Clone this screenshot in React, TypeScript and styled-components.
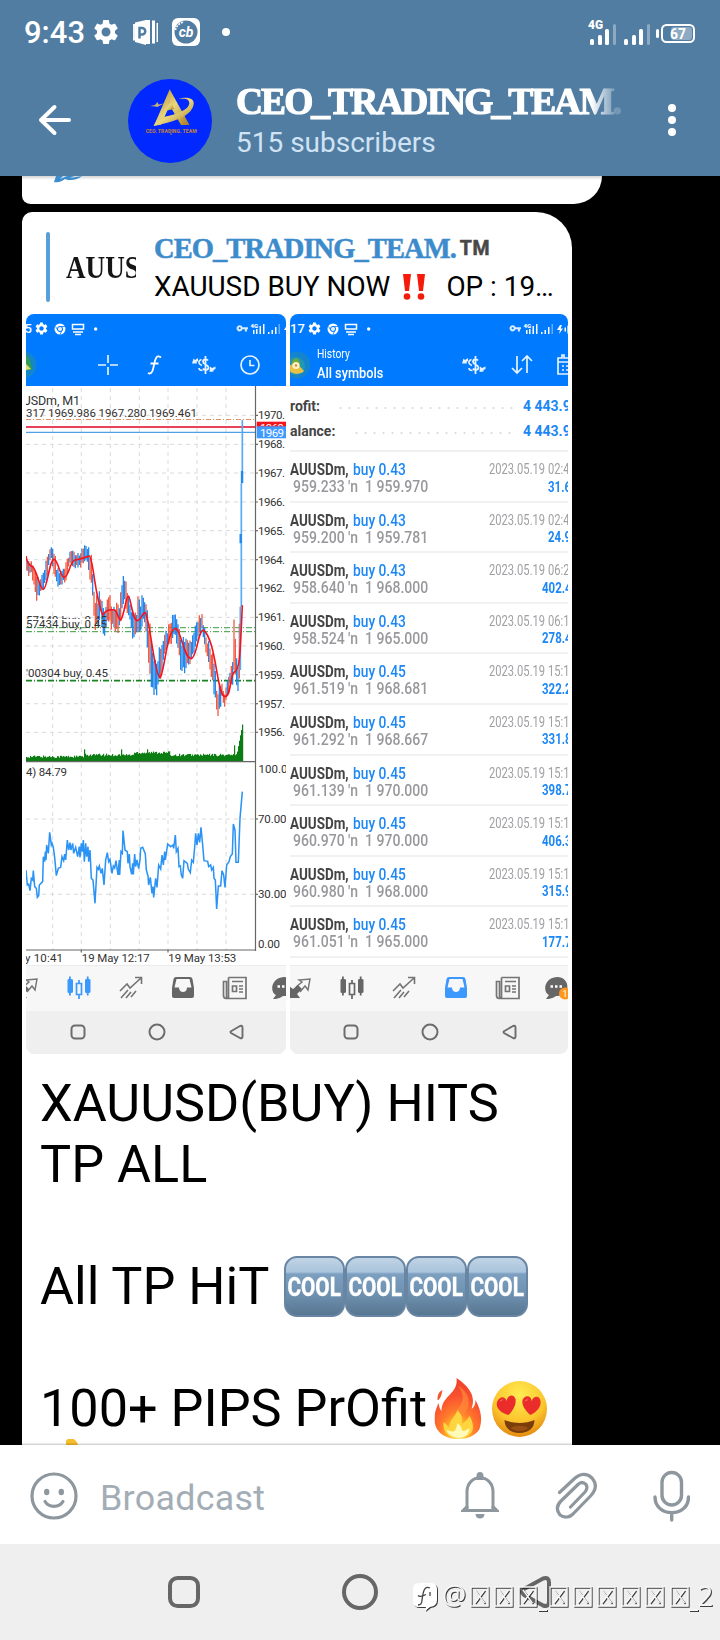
import { Fragment, ReactNode } from 'react'
import { MdSettings, MdVpnKey } from 'react-icons/md'
import styled, { createGlobalStyle } from 'styled-components'

const GlobalStyle = createGlobalStyle`
  * {
    box-sizing: border-box;
  }

  body {
    margin: 0;
    background: #000;
    font-family: Roboto, sans-serif;
  }

  svg {
    display: block;
    flex-shrink: 0;
  }
`

const SPhone = styled.div`
  display: flex;
  flex-direction: column;
  width: 720px;
  height: 1640px;
  overflow: hidden;
`

/* ---------- header ---------- */

const SHeader = styled.header`
  height: 176px;
  background: #517da2;
  color: #fff;
`

const SStatusBar = styled.div`
  display: flex;
  align-items: center;
  height: 64px;
  padding: 0 24px;
`

const STime = styled.span`
  width: 68px;
  padding-top: 1px;
  font-size: 31px;
  font-weight: 500;
  line-height: 64px;
`

const SSpacer = styled.div`
  flex: 1;
`

const SToolbar = styled.div`
  display: flex;
  height: 112px;
  padding-left: 36px;
`

const SToolIcon = styled.div<{ $top: number; $width: number }>`
  width: ${({ $width }) => $width}px;
  padding-top: ${({ $top }) => $top}px;
`

const SChannel = styled.div`
  flex: 1;
  padding-top: 16px;
`

const SChannelName = styled.div`
  width: 387px;
  overflow: hidden;
  font-family: 'Liberation Serif', serif;
  font-size: 37.4px;
  font-weight: 700;
  line-height: 44px;
  letter-spacing: -1.9px;
  white-space: nowrap;
  -webkit-text-stroke: 1.2px #fff;
  mask-image: linear-gradient(90deg, #000 355px, rgba(0, 0, 0, 0.2) 380px);
`

const SSubscribers = styled.div`
  margin-top: 2px;
  color: #d0e3f4;
  font-size: 28px;
  line-height: 34px;
`

/* ---------- chat ---------- */

const SChat = styled.main`
  flex: 1;
  min-height: 0;
  padding-left: 22px;
  overflow: hidden;
  background: #000;
`

const SPreviousBubble = styled.div`
  width: 580px;
  height: 28px;
  margin-bottom: 8px;
  padding-left: 32px;
  background: linear-gradient(#d4d4d4, #fff 4px);
  border-radius: 0 0 34px 10px;
`

const SBubble = styled.article`
  width: 550px;
  height: 1400px;
  padding: 19px 4px 0;
  background: #fff;
  border-radius: 10px 36px 0 0;
`

const SReply = styled.div`
  display: flex;
  height: 83px;
  padding: 1px 0 0 20px;
`

const SReplyLine = styled.div`
  width: 4px;
  height: 70px;
  margin-right: 16px;
  background: #5a9fd8;
  border-radius: 2px;
`

const SReplyThumb = styled.div`
  width: 70px;
  height: 70px;
  margin-right: 18px;
  overflow: hidden;
`

const SThumbText = styled.div`
  padding-top: 1px;
  color: #151515;
  font-family: 'Liberation Serif', serif;
  font-size: 31.5px;
  font-weight: 700;
  line-height: 70px;
  white-space: nowrap;
  transform: scaleX(0.86);
  transform-origin: left;
`

const SReplyText = styled.div`
  white-space: nowrap;
`

const SReplyName = styled.div`
  display: flex;
  height: 35px;
  color: #3c8ccc;
  font-family: 'Liberation Serif', serif;
  font-size: 28.5px;
  font-weight: 700;
  line-height: 34px;
  letter-spacing: -0.92px;
  -webkit-text-stroke: 0.5px currentColor;
`

const STrade = styled.span`
  margin: 2px 0 0 4px;
  color: #484848;
  font-family: Roboto, sans-serif;
  font-size: 19.5px;
  line-height: 30px;
  letter-spacing: 0.6px;
`

const SReplyBody = styled.div`
  display: flex;
  color: #000;
  font-size: 27.9px;
  line-height: 40px;
`

const SBang = styled.span`
  display: flex;
  width: 56px;
  padding: 7px 0 0 12px;
`

const SAlbum = styled.div`
  display: flex;
  gap: 4px;
  height: 740px;
`

const SMessage = styled.div`
  padding: 19px 0 0 14px;
  color: #000;
  font-size: 52.2px;
  line-height: 61px;
  white-space: nowrap;
`

const SLine = styled.div`
  display: flex;
  align-items: center;
  height: 61px;
`

const SCools = styled.span`
  display: flex;
  margin-left: 14.5px;
`

const SCool = styled.span`
  display: flex;
  justify-content: center;
  width: 61px;
  height: 61px;
  color: #fff;
  background: linear-gradient(#c1d4e5 0, #a9c4dc 14px, #7d9fc0 16px, #6f91b0 36px, #577691);
  border: 2px solid #6886a3;
  border-radius: 13px;
  font-size: 25px;
  font-weight: 700;
  line-height: 59px;

  span {
    transform: scaleX(0.83);
    -webkit-text-stroke: 0.4px #fff;
  }
`

/* ---------- attached trading app screenshots ---------- */

const SShot = styled.div<{ $width: number }>`
  width: ${({ $width }) => $width}px;
  height: 740px;
  overflow: hidden;
  background: #fff;
  border-radius: 8px;
`

const SShotInner = styled.div<{ $shift: number }>`
  display: flex;
  flex-direction: column;
  width: 300px;
  height: 740px;
  margin-left: ${({ $shift }) => -$shift}px;
`

const SShotTop = styled.div`
  height: 72px;
  color: #fff;
  background: #007aff;
`

const SShotStatus = styled.div`
  display: flex;
  align-items: center;
  height: 29px;
  font-size: 13px;
  font-weight: 500;
`

const SShotTime = styled.span`
  width: 17px;
`

const SShotBar = styled.div`
  display: flex;
  align-items: center;
  height: 43px;
`

const SShotTitles = styled.div`
  width: 142px;
  margin-left: -1px;
`

const SSqueeze = styled.div<{ $scale: number }>`
  white-space: pre;
  transform: scaleX(${({ $scale }) => $scale});
  transform-origin: left;
`

const SHistoryLabel = styled(SSqueeze)`
  font-size: 12px;
  line-height: 17px;
`

const SHistoryTitle = styled(SSqueeze)`
  font-size: 15px;
  font-weight: 500;
  line-height: 21px;
`

const SShotTools = styled.div<{ $gap: number; $left: number }>`
  display: flex;
  align-items: center;
  gap: ${({ $gap }) => $gap}px;
  margin-left: ${({ $left }) => $left}px;
`

const SShotContent = styled.div<{ $shift: number }>`
  height: 580px;
  padding-left: ${({ $shift }) => $shift}px;
`

const SShotTabs = styled.div`
  display: flex;
  height: 45px;
  margin-left: -16px;
  padding-bottom: 2px;
  background: #f7f7f7;
  box-shadow: 0 -1px 0 #ececec;
`

const SShotTab = styled.div`
  display: flex;
  flex: 0 0 52px;
  justify-content: center;
  align-items: center;

  &:last-child {
    flex-basis: 46px;
  }
`

const SShotNav = styled.div`
  display: flex;
  height: 43px;
  padding: 0 0 2px 21px;
  background: #efefef;
`

const SShotNavItem = styled.div`
  display: flex;
  flex: 0 0 79.3px;
  justify-content: center;
  align-items: center;
`

const STotals = styled.div`
  width: 278px;
  height: 66px;
  padding-top: 7px;
  border-bottom: 2px solid #f0f0f0;
`

const STotal = styled.div`
  display: flex;
  height: 25px;
  overflow: hidden;
  color: #444;
  font-size: 14px;
  font-weight: 700;
  line-height: 27px;
`

const STotalName = styled.div<{ $width: number }>`
  width: ${({ $width }) => $width}px;
`

const SDots = styled.div`
  flex: 1;
  margin: 14px 8px 0 0;
  height: 2px;
  background: radial-gradient(circle, #ddd 1px, transparent 1.2px) 0 0 / 9px 2px;
`

const STotalValue = styled.div`
  width: 45px;
  color: #1c87f5;
  white-space: nowrap;
`

const SDeal = styled.div`
  display: flex;
  width: 278px;
  height: 50.6px;
  padding-top: 8px;
  overflow: hidden;
  border-bottom: 2px solid #f1f1f2;
`

const SDealLeft = styled.div`
  flex: 0 0 199px;
  font-size: 16px;
  line-height: 19px;
`

const SDealTitle = styled.div`
  display: flex;
  height: 17px;
  color: #444;
  font-weight: 700;
`

const SDealSymbol = styled.div`
  width: 63px;
`

const SDealSide = styled.div`
  color: #1c87f5;
  font-weight: 500;
`

const SDealPrices = styled(SSqueeze)`
  margin-left: 3px;
  color: #98989c;
  font-weight: 500;
`

const SDealRight = styled.div`
  padding-top: 1px;
  font-size: 13.8px;
  line-height: 17.5px;
`

const SDealTime = styled(SSqueeze)`
  color: #a0a0a4;
`

const SDealProfit = styled(SSqueeze)<{ $left: number }>`
  margin-left: ${({ $left }) => $left}px;
  color: #1c87f5;
  font-weight: 700;
`

/* ---------- bottom ---------- */

const SComposer = styled.footer`
  position: relative;
  display: flex;
  align-items: center;
  height: 99px;
  padding: 3px 30px 0 30px;
  background: #fff;
  box-shadow: 0 -1px 2px rgba(0, 0, 0, 0.25);
`

const SPlaceholder = styled.div`
  flex: 1;
  padding: 3px 0 0 22px;
  color: #a3adb5;
  font-size: 35.8px;
  line-height: 50px;
  letter-spacing: 0.3px;
`

const SComposerIcons = styled.div`
  display: flex;
  align-items: center;
  gap: 54px;
`

const SNavigation = styled.nav`
  position: relative;
  display: flex;
  justify-content: space-between;
  align-items: center;
  height: 96px;
  padding: 0 166px;
  background: #efefef;
`

const SWatermark = styled.div`
  position: absolute;
  top: 38px;
  left: 412px;
  display: flex;
  align-items: center;
  height: 30px;
  color: #f6f6f6;
  font-family: 'Open Sans', sans-serif;
  font-size: 27px;
  line-height: 30px;
  filter: drop-shadow(1px 1px 0 rgba(0, 0, 0, 0.75));
`

const SAt = styled.span`
  width: 26px;
  margin: -4px 0 0 4px;
  font-size: 27px;
`

const SUnderscore = styled.span`
  width: 9px;
  height: 2px;
  margin: 26px 0 0 -3px;
  background: #f6f6f6;
`

const STofu = styled.span`
  width: 24.2px;
  padding-left: 2px;
`

const SDigit = styled.span`
  margin-top: -2px;
`

const CROSS_COUNT = [3, 6]

/* ---------- data ---------- */

type Deal = { lots: string; prices: string; time: string; profit: string }

const DEALS: Deal[] = [
  { lots: '0.43', prices: '959.233 ′n  1 959.970', time: '02:4', profit: '31.6' },
  { lots: '0.43', prices: '959.200 ′n  1 959.781', time: '02:4', profit: '24.9' },
  { lots: '0.43', prices: '958.640 ′n  1 968.000', time: '06:2', profit: '402.4' },
  { lots: '0.43', prices: '958.524 ′n  1 965.000', time: '06:1', profit: '278.4' },
  { lots: '0.45', prices: '961.519 ′n  1 968.681', time: '15:1', profit: '322.2' },
  { lots: '0.45', prices: '961.292 ′n  1 968.667', time: '15:1', profit: '331.8' },
  { lots: '0.45', prices: '961.139 ′n  1 970.000', time: '15:1', profit: '398.7' },
  { lots: '0.45', prices: '960.970 ′n  1 970.000', time: '15:1', profit: '406.3' },
  { lots: '0.45', prices: '960.980 ′n  1 968.000', time: '15:1', profit: '315.9' },
  { lots: '0.45', prices: '961.051 ′n  1 965.000', time: '15:1', profit: '177.7' },
]

const PRICE_LABELS = [
  '1970.', '1968.', '1967.', '1966.', '1965.', '1964.', '1962.', '1961.', '1960.', '1959.', '1957.', '1956.',
]

// x, high, low
const RANGES = [
  [18, 740, 790], [35, 750, 800], [50, 800, 870], [60, 815, 860], [75, 755, 830], [93, 700, 745],
  [110, 755, 838], [120, 790, 835], [135, 765, 815], [150, 725, 770], [175, 735, 770], [193, 698, 765],
  [205, 705, 770], [215, 735, 850], [225, 870, 1005], [240, 835, 920], [252, 890, 980], [265, 840, 940],
  [285, 890, 975], [300, 870, 975], [310, 765, 880], [325, 840, 930], [342, 910, 1005], [355, 860, 980],
  [370, 850, 930], [385, 900, 1070], [402, 1050, 1190], [415, 1020, 1140], [430, 975, 1060], [450, 925, 1020],
  [467, 900, 980], [485, 980, 1098], [500, 990, 1075], [515, 990, 1050], [530, 930, 1000], [545, 905, 965],
  [560, 980, 1040], [580, 1040, 1130], [592, 1130, 1232], [605, 1115, 1170], [615, 1140, 1195], [630, 1090, 1130],
  [638, 1040, 1120], [643, 900, 1110], [648, 1050, 1120], [654, 1040, 1140], [660, 900, 1090],
]

const AVERAGE =
  'M18 738Q22 765 38 770C50 780 60 838 70 838C82 838 88 748 102 748C114 748 120 802 133 802C146 802 150 752 165 750C180 748 196 742 208 738C220 742 222 850 248 915C262 895 272 900 284 900C292 904 296 930 302 930C312 920 318 858 325 858C334 866 336 930 352 932C364 932 368 905 376 908C392 940 402 1090 420 1103C434 1090 440 955 468 955C486 970 492 1046 514 1046C532 1040 534 960 550 960C590 990 590 1160 615 1160C634 1158 630 1094 643 1086C660 1078 660 1040 667 886'

const RSI =
  '18,720 22,765 26,762 30,782 34,745 38,750 40,722 44,770 49,775 52,802 56,797 58,765 68,755 70,680 74,695 76,665 78,690 80,645 85,670 89,607 94,645 96,640 100,652 104,682 109,737 115,715 122,712 126,680 131,692 134,672 137,690 142,630 146,660 150,638 153,660 158,640 161,670 167,652 173,680 178,650 180,682 184,640 187,665 190,630 193,695 197,640 200,680 204,650 206,695 210,660 214,745 219,750 225,820 231,712 235,718 238,708 243,730 247,715 252,765 257,690 262,668 266,695 270,688 276,730 280,708 284,714 288,692 294,735 298,690 299,735 303,665 307,670 309,602 315,660 322,665 324,700 328,672 330,710 335,733 338,700 340,733 344,672 347,710 351,690 356,716 360,690 362,655 368,652 376,672 379,720 384,738 386,765 391,742 396,790 399,770 401,802 407,745 411,772 416,705 422,717 426,675 430,705 434,665 436,690 443,642 452,650 459,645 461,655 466,615 469,665 474,655 477,710 481,708 484,735 488,745 492,692 502,700 505,718 511,728 515,690 520,697 525,640 527,610 531,645 535,610 539,637 543,592 548,645 552,692 563,694 566,710 572,705 575,720 580,712 582,745 586,750 590,837 595,768 602,768 606,722 611,735 615,772 620,705 627,695 631,680 637,672 640,582 645,600 648,697 655,697 660,565 667,485'

const noise = (seed: number) => {
  const value = Math.sin(seed * 127.1) * 43758.5453
  return value - Math.floor(value)
}

const rangeAt = (x: number) => {
  const next = RANGES.findIndex((range) => range[0] > x)
  if (next < 1) return RANGES[next === 0 ? 0 : RANGES.length - 1].slice(1)
  const [x0, high0, low0] = RANGES[next - 1]
  const [x1, high1, low1] = RANGES[next]
  const part = (x - x0) / (x1 - x0)
  return [high0 + (high1 - high0) * part, low0 + (low1 - low0) * part]
}

const CANDLES = Array.from({ length: 161 }, (_, i) => {
  const x = 18 + i * 4
  const [high, low] = rangeAt(x)
  const size = low - high
  return {
    x,
    y1: high + size * 0.4 * noise(i + 1) - 6,
    y2: low - size * 0.4 * noise(i + 400) + 6,
    color: noise(i + 90) > 0.42 ? '#1f84ea' : '#f0563f',
  }
})

const VOLUMES = Array.from({ length: 217 }, (_, i) => {
  const x = 18 + i * 3
  let height = (x < 190 ? 10 : x > 340 && x < 450 ? 22 : 15) + noise(i + 7) * 8
  if ([192, 303, 381].includes(x)) height = 36
  if (x === 642) height = 48
  if (x > 650) height = 24 + (x - 650) * 5.4
  return { x, height }
})

/* ---------- small icons ---------- */

const Signal = () => (
  <svg width="28" height="21" viewBox="0 0 28 21" fill="#fff">
    <rect x="0" y="15" width="4" height="6" rx="1.5" />
    <rect x="8" y="11" width="4" height="10" rx="1.5" />
    <rect x="15" y="5" width="4" height="16" rx="1.5" />
    <rect x="23" y="0" width="3" height="21" rx="1.5" opacity=".35" />
  </svg>
)

const StatusIcons = () => (
  <>
    <MdSettings size={30} style={{ marginLeft: -1 }} />
    <svg width="80" height="30" viewBox="0 0 80 30">
      <path fill="#fff" d="M14 5.500 25 3v25l-11-3Z" />
      <path fill="none" stroke="#fff" strokeWidth="1.800" d="M15 8h-2v14.500h2" />
      <path fill="#fff" d="M24 3h5v24h-5zM31 3.500h3v23h-3zM35.500 6H37v19h-1.500z" />
      <path fill="none" stroke="#517da2" strokeWidth="2.500" d="M18.500 21.500V11H21a3 3 0 0 1 0 6.500h-2.500" />
      <rect x="51" y="1" width="28" height="28" rx="6" fill="#fff" />
      <circle cx="65" cy="15" r="11.500" fill="#517da2" />
      <path d="M54.500 13a10.500 10.500 0 0 1 8.500-8" fill="none" stroke="#fff" strokeWidth="1.500" strokeDasharray="2 1" />
      <text x="65" y="19.500" fill="#fff" fontSize="14" fontWeight="700" fontStyle="italic" textAnchor="middle">
        cb
      </text>
    </svg>
    <svg width="30" height="8" viewBox="0 0 30 8">
      <circle cx="25" cy="4" r="4" fill="#fff" />
    </svg>
  </>
)

const SystemIcons = () => (
  <svg width="108" height="30" viewBox="588 15 108 30" fill="#fff">
    <text x="588" y="26.500" fontSize="13" fontWeight="900" textLength="15" lengthAdjust="spacingAndGlyphs">
      4G
    </text>
    <g transform="translate(590 22)">
      <Signal />
    </g>
    <g transform="translate(624 22)">
      <Signal />
    </g>
    <rect x="656" y="27" width="3" height="9" rx="1.500" />
    <rect x="662" y="23" width="32" height="17" rx="4.500" fill="none" stroke="#fff" strokeWidth="2" />
    <rect x="671" y="25" width="21" height="13" rx="3" opacity=".35" />
    <text x="670" y="37" fontSize="15" fontWeight="700" textLength="16" lengthAdjust="spacingAndGlyphs">
      67
    </text>
  </svg>
)

const Avatar = () => (
  <svg width="84" height="84" viewBox="0 0 84 84">
    <defs>
      <linearGradient id="gold" x1="0" y1="0" x2="1" y2="1">
        <stop offset="0" stopColor="#a8832f" />
        <stop offset=".5" stopColor="#ead67c" />
        <stop offset="1" stopColor="#a5791f" />
      </linearGradient>
    </defs>
    <circle cx="42" cy="42" r="42" fill="#0028ff" />
    <path fill="url(#gold)" d="M41.700 10.300 26 46.800l7-1 8.700-19.500L53 46h8.500Z" />
    <path fill="url(#gold)" d="M36.500 32 41.700 21l4.500 9Z" />
    <path
      fill="url(#gold)"
      d="M25.500 47c9-2 39-7 40.300-22.500 0-7-10-6.500-15.500-4.500 6.500-.8 11-.6 11 4.500C60 34.500 34 38 29.500 39.500Z"
    />
    <path fill="#c9b07a" d="m22 27 5-1 2.500-3 1 2.500 5.500-1-5 2.500-1.500 1-2-.5Z" />
    <text x="17.700" y="53.500" fill="#b57b4d" fontSize="5" fontWeight="900" textLength="51" lengthAdjust="spacingAndGlyphs">
      CEO. TRADING. TEAM
    </text>
    <rect x="42" y="54.500" width="2" height="1" fill="#a5744f" />
  </svg>
)

const Fire = () => (
  <svg width="48" height="61" viewBox="0 0 48 61">
    <defs>
      <radialGradient id="flame" cx=".5" cy=".92" r=".85">
        <stop offset="0" stopColor="#fff48a" />
        <stop offset=".25" stopColor="#ffb428" />
        <stop offset=".45" stopColor="#ff7a2c" />
        <stop offset=".75" stopColor="#f9502f" />
        <stop offset="1" stopColor="#f0442c" />
      </radialGradient>
    </defs>
    <path
      fill="url(#flame)"
      d="M22 0C34 8 42 18 37 31c3-2 4-5 4-9 6 11 7 20 4 29-4 7-13 10-21 10C9 61 0 53 0 41c0-7 2-11 4-16 1 4 1 6 3 8 0-7 3-11 8-16 5-5 8-10 7-17Z"
    />
    <path fill="#ff8a3a" d="M24 8c4 7 6 12 2 19-4 6-6 9-4 15 7-4 12-9 12-17 1-7-4-13-10-17Z" opacity=".7" />
    <path fill="#f4552d" d="M3 22c0-5 1-8 5-10-1 4-1 7-4 10Z" />
    <path
      fill="#ffd53f"
      d="M24 60C14 60 8 54 9 44c3 2 4 4 6 6-1-7 5-10 8-18 4 5 6 8 4 14 4-2 6-5 8-8 5 8 7 21-11 22Z"
    />
    <path fill="#fffab8" d="M24 60c-7-1-11-4-12-8 4 1 6 2 8 1 2-2 2-5 3-8 3 2 4 5 5 8 3 0 5-2 7-3 0 6-4 10-11 10Z" />
  </svg>
)

const HeartEyes = () => (
  <svg width="56" height="59" viewBox="0 0 56 59">
    <defs>
      <radialGradient id="face" cx=".5" cy=".25" r=".8">
        <stop offset="0" stopColor="#ffeb52" />
        <stop offset=".6" stopColor="#fbc42c" />
        <stop offset="1" stopColor="#e07f0a" />
      </radialGradient>
    </defs>
    <ellipse cx="28" cy="30" rx="27.500" ry="28" fill="url(#face)" />
    <path fill="#ea2c2a" d="M17 36C9 34 3 28 6 22c3-6 8-4 9 0 1-6 7-8 9-2 1 6-3 12-7 16Z" />
    <path fill="#ea2c2a" d="M39 36c-5-4-9-10-8-15 3-6 9-4 9 1 2-5 8-6 9 0 1 6-4 11-10 14Z" />
    <path fill="#ff8173" d="M8 23c1-3 3-3 4-2-2 0-3 1-4 2ZM33 23c1-3 3-3 4-2-2 0-3 1-4 2Z" />
    <path fill="#7c3d0c" d="M13 41c9 4 21 4 30 0 0 8-6 13-15 13s-15-5-15-13Z" />
    <path fill="#9a5012" d="M19 49c6-3 12-3 18 0-5 4-13 4-18 0Z" />
  </svg>
)

const Money = () => (
  <svg width="24" height="20" viewBox="0 0 24 20" fill="none" stroke="#fff" opacity=".9">
    <path strokeWidth="1.600" d="M9.500 4.500C8 5 6.500 6 7 8c.5 1.500 2 2 3 2.500M7 13c0 2 2 2.500 3.500 2.500" />
    <path strokeWidth="1.800" d="M16 5.500c-1-1.600-5-1.600-5 1.200 0 3 5.500 2.500 5.500 5.800 0 3-4.500 3-5.500 1M13.500 1v18" />
    <path fill="#fff" stroke="none" d="m0 8.500 1.500-5L3 5l3-2v3L4.500 7l.5 1.500ZM17.500 17l.5-5.500 2 1.500 3.500-1.500V14l-2 1v1.500Z" />
  </svg>
)

const ShotStatus = ({ time }: { time: string }) => (
  <SShotStatus>
    <SShotTime>{time}</SShotTime>
    <MdSettings size={15} />
    <svg width="190" height="16" viewBox="0 0 190 16">
      <circle cx="11" cy="8" r="5.500" fill="#fff" />
      <circle cx="11" cy="8" r="2.600" fill="#dfeeff" stroke="#007aff" />
      <path stroke="#007aff" strokeWidth=".8" d="M11 5.500h5M9 9.500 6.500 5.500M13 9.500l-2 4" />
      <path fill="none" stroke="#fff" strokeWidth="1.500" d="M23.500 3.500h11v4.500h-11zM24 11h10M26 13.500h6" />
      <circle cx="46.700" cy="8" r="1.700" fill="#fff" />
    </svg>
    <MdVpnKey size={12.5} style={{ marginLeft: -3, opacity: 0.85 }} />
    <svg width="50" height="14" viewBox="0 0 50 14" fill="#fff">
      <text x="1.500" y="5.500" fontSize="6" fontWeight="900">
        4G
      </text>
      <path d="M4 8h1.500v4H4zM7 7h1.500v5H7zM10.500 4H12v8h-1.500zM14 2h1.500v10H14zM19 10h1.500v2H19zM22.500 8H24v4h-1.500zM26 5h1.500v7H26z" />
      <path d="M29.500 2H31v10h-1.500z" opacity=".4" />
      <path d="m38 3-3 5h3l-1 4 4-5.500h-2.500L40 3ZM42.500 5.500H44v4h-1.500z" />
      <rect x="46" y="3" width="13" height="9" rx="2" fill="none" stroke="#fff" strokeWidth="1.300" />
    </svg>
  </SShotStatus>
)

const ShotLogo = () => (
  <svg width="28" height="30" viewBox="6 0 28 30">
    <circle cx="13" cy="15" r="13.500" fill="#1584cf" />
    <circle cx="12" cy="16" r="9" fill="#27a3a0" opacity=".7" />
    <path fill="#79a63a" d="M8 12c3-6 7-3 8 1l-1 5-7-1Z" />
    <path fill="#e8c043" d="M4 19c3-8 10-6 16 2-3 4-12 4-16-2Z" />
    <circle cx="12" cy="15.500" r="3.600" fill="#fff1c9" />
    <circle cx="12" cy="15.500" r="1.200" fill="#df8a31" />
  </svg>
)

const TAB_ICONS: ((color: string) => ReactNode)[] = [
  () => (
    <>
      <path fill="none" stroke="#747474" strokeWidth="1.400" d="m8 11 6-5-3-2 11-1-2 11-3-4-5 6" />
      <path fill="#666" d="m1 10 4 3 5-4 4 4-5 5 3 4H1Z" />
    </>
  ),
  (color) => (
    <>
      <path
        fill={color}
        d="M.5 4Q.5 3 2 3V.5h1.800V3Q6 3 6 4v12q0 1-2.200 1v2.500H2V17Q.5 17 .5 16ZM18 4q0-1 1.800-1V.5h1.800V3q1.900 0 1.900 1v12q0 1-1.900 1v2.500h-1.800V17Q18 17 18 16Z"
      />
      <path fill="none" stroke={color} strokeWidth="1.700" d="M9.500 7.500h5v11h-5zM12 4v3M12 18.500V23" />
    </>
  ),
  () => (
    <path
      fill="none"
      stroke="#747474"
      strokeWidth="1.600"
      d="m1 15 7-7 3 4L22 2M16 1.500h6.500V8M2 22l7-8M7 22l5-6M12 21l5-6"
    />
  ),
  (color) => (
    <path
      fill={color}
      fillRule="evenodd"
      d="M5 1h14q2 0 2.500 2L23 12v8q0 2-2 2H3q-2 0-2-2v-8l1.500-9Q3 1 5 1ZM5.500 3 3.500 11.500H8c0 6 8 6 8 0h4.500L18.500 3Z"
    />
  ),
  () => (
    <path
      fill="none"
      stroke="#747474"
      strokeWidth="1.700"
      d="M5.500 1.500h17.500v21H3q-2.500 0-2.500-3V5.500h3v15q0 2 2 2V1.500M9 5.500h11M9.500 10h4v5.500h-4zM16 10h4M16 13h4M16 16h4"
    />
  ),
  () => (
    <>
      <path fill="#666" d="M12 1C-2 2-2 17 4 19l-3 4c6 0 8-2 10-3 15 1 15-19 1-19Z" />
      <path stroke="#fff" strokeWidth="2.500" strokeDasharray="2.500 2" d="M5.500 10.500h13" />
      <circle cx="20" cy="17.500" r="6" fill="#ff981f" />
      <text x="20" y="21" fill="#fff" fontSize="9" textAnchor="middle">
        1
      </text>
    </>
  ),
]

const ShotFooter = ({ active }: { active: number }) => (
  <>
    <SShotTabs>
      {TAB_ICONS.map((icon, i) => (
        <SShotTab key={i}>
          <svg width="24" height="24" viewBox="0 0 24 24" overflow="visible">
            {icon(i === active ? '#3b98fc' : '#666')}
          </svg>
        </SShotTab>
      ))}
    </SShotTabs>
    <SShotNav>
      <SShotNavItem>
        <svg width="16" height="16" viewBox="0 0 16 16">
          <rect x="1.500" y="1.500" width="13" height="13" rx="3.500" fill="none" stroke="#6c6c6c" strokeWidth="2" />
        </svg>
      </SShotNavItem>
      <SShotNavItem>
        <svg width="18" height="18" viewBox="0 0 18 18">
          <circle cx="9" cy="9" r="7.500" fill="none" stroke="#6c6c6c" strokeWidth="2" />
        </svg>
      </SShotNavItem>
      <SShotNavItem>
        <svg width="15" height="16" viewBox="0 0 15 16">
          <path
            d="M2 7.200 11 2q2.500-1 2.500 1.500v9q0 2.500-2.500 1.500L2 9Q1 8 2 7.200Z"
            fill="none"
            stroke="#6c6c6c"
            strokeWidth="1.900"
          />
        </svg>
      </SShotNavItem>
    </SShotNav>
  </>
)

/* ---------- chart ---------- */

const GRID_X = [26.7, 55.3, 84.3, 113.3, 142, 171, 200]
const GRID_Y = [101.3, 130.3, 159, 188, 216.7, 245.7, 274.3, 303.3, 332, 360.7, 389.7, 418.3]

const Chart = () => (
  <svg width="260" height="580" viewBox="0 72 260 580" fontSize="11.500" fill="#333">
    <g stroke="#dadada" strokeDasharray="4 4">
      {GRID_X.map((x) => (
        <path key={x} d={`M${x} 74V636`} />
      ))}
      {[...GRID_Y, 505, 580.3].map((y) => (
        <path key={y} d={`M0 ${y}H229`} />
      ))}
    </g>
    <path stroke="#e98d62" strokeDasharray="5 2 1 2" d="M0 105.500H229" />
    <path stroke="#ea4258" strokeWidth="2.200" d="M0 113H229" />
    <path stroke="#4d9fe8" strokeWidth="1.200" d="M0 118.300H229" />
    <g stroke="#3b9a42" strokeDasharray="6 2 1 2">
      <path d="M0 313.700H229M0 317.700H229" />
      <path strokeWidth="1.800" stroke="#178321" d="M0 366.700H229" />
    </g>
    <g transform="translate(-6 -4) scale(.33333)">
      {CANDLES.map(({ x, y1, y2, color }) => (
        <path key={x} d={`M${x} ${y1}V${y2}`} stroke={color} strokeWidth="3.800" />
      ))}
      <path d="M667 330V520M664 520V890M661 890V1080" stroke="#55aaf5" strokeWidth="5" />
      <path d="M666 483v36M662 672v28" stroke="#2288f0" strokeWidth="7" />
      <path d={AVERAGE} fill="none" stroke="#f0151f" strokeWidth="4.800" />
    </g>
    <g transform="translate(-6 316) scale(.33333)">
      {VOLUMES.map(({ x, height }) => (
        <rect key={x} x={x} y={394 - height} width="3.600" height={height} fill="#0b7d12" />
      ))}
      <polyline points={RSI} fill="none" stroke="#2a93f5" strokeWidth="4.600" />
    </g>
    <g stroke="#666" strokeWidth="1.200">
      <path d="M0 447.700H230M0 636H230M229.500 72V637" />
      {[...GRID_Y, 505, 580.3].map((y) => (
        <path key={y} d={`M229 ${y}h3`} />
      ))}
      <path d="M55.300 636v2.500M142 636v2.500" />
    </g>
    <rect x="230.700" y="107.700" width="30" height="6" fill="#f3141c" />
    <clipPath id="ask">
      <rect x="230" y="107.700" width="30" height="4.500" />
    </clipPath>
    <text x="234" y="118" fill="#fff" textLength="24" clipPath="url(#ask)">
      1969
    </text>
    <rect x="230.700" y="112.300" width="30" height="12" fill="#3f9aff" />
    <text x="234" y="122.500" fill="#fff" textLength="24">
      1969
    </text>
    {PRICE_LABELS.map((label, i) => (
      <text key={label} x="232" y={GRID_Y[i] + 4} textLength="27">
        {label}
      </text>
    ))}
    <text x="232.500" y="458.700" textLength="29">100.0</text>
    <text x="232" y="509" textLength="28.500">70.00</text>
    <text x="232" y="584.300" textLength="28.500">30.00</text>
    <text x="232" y="633.700" textLength="22">0.00</text>
    <text x="-2" y="90.700" fontSize="12.500" textLength="56">JSDm, M1</text>
    <text x="0" y="102.700" textLength="171">317 1969.986 1967.280 1969.461</text>
    <clipPath id="order">
      <rect x="0" y="302" width="90" height="3" />
    </clipPath>
    <text x="0" y="310" textLength="81" clipPath="url(#order)">57149 buy, 0.45</text>
    <text x="0" y="314.300" textLength="81">57434 buy, 0.45</text>
    <text x="0" y="362.700" textLength="82">'00304 buy, 0.45</text>
    <text x="0" y="461.700" textLength="41">4) 84.79</text>
    <text x="-1" y="648.300" textLength="38">y 10:41</text>
    <text x="55.800" y="648.300" textLength="68">19 May 12:17</text>
    <text x="142.300" y="648.300" textLength="68">19 May 13:53</text>
  </svg>
)

const ChartShot = () => (
  <SShot $width={260}>
    <SShotInner $shift={9}>
      <SShotTop>
        <ShotStatus time="15" />
        <SShotBar>
          <svg width="24" height="30" viewBox="4 0 24 30">
            <circle cx="10" cy="15" r="13.500" fill="#1586c9" />
            <path fill="#2f9c58" d="M10 5c8 1 8 8 9 15H9Z" />
            <path fill="#d9df6d" d="m13 14 5 5-5 1Z" />
          </svg>
          <SShotTools $left={56.5} $gap={24}>
            <svg width="20" height="20" viewBox="0 0 20 20" stroke="#fff" strokeWidth="1.700" opacity=".9">
              <path d="M10 0v8M10 12v8M0 10h8M12 10h8" />
            </svg>
            <svg width="26" height="20" viewBox="0 0 26 20" fill="none" stroke="#fff" strokeWidth="1.800">
              <path d="M19 2.500C14-1 13 5 12 10s-2 10-6 8M8.500 8.500h8" />
            </svg>
            <Money />
            <svg width="20" height="20" viewBox="0 0 20 20" fill="none" stroke="#fff" strokeWidth="1.700" opacity=".9">
              <circle cx="10" cy="10" r="9" />
              <path d="M10 5v5.500h4.500" />
            </svg>
          </SShotTools>
        </SShotBar>
      </SShotTop>
      <SShotContent $shift={9}>
        <Chart />
      </SShotContent>
      <ShotFooter active={1} />
    </SShotInner>
  </SShot>
)

const HistoryShot = () => (
  <SShot $width={278}>
    <SShotInner $shift={0}>
      <SShotTop>
        <ShotStatus time="17" />
        <SShotBar>
          <ShotLogo />
          <SShotTitles>
            <SHistoryLabel $scale={0.86}>History</SHistoryLabel>
            <SHistoryTitle $scale={0.85}>All symbols</SHistoryTitle>
          </SShotTitles>
          <SShotTools $left={3} $gap={23.5}>
            <Money />
            <svg width="24" height="20" viewBox="0 0 24 20" fill="none" stroke="#fff" strokeWidth="1.700" opacity=".9">
              <path d="M7 1v17M2 13l5 5 5-5M17 18V1M12 6l5-5 5 5" />
            </svg>
            <svg width="20" height="22" viewBox="0 0 20 22" fill="none" stroke="#fff" strokeWidth="1.700" opacity=".9">
              <path d="M1 4h4V1h2v3h7V1h2v3h3v16H1zM1 8h18" />
              <path strokeDasharray="2 2" d="M5 12h10M5 16h10" />
            </svg>
          </SShotTools>
        </SShotBar>
      </SShotTop>
      <SShotContent $shift={0}>
        <STotals>
          <STotal>
            <STotalName $width={46}>rofit:</STotalName>
            <SDots />
            <STotalValue>4 443.9</STotalValue>
          </STotal>
          <STotal>
            <STotalName $width={62}>alance:</STotalName>
            <SDots />
            <STotalValue>4 443.9</STotalValue>
          </STotal>
        </STotals>
        {DEALS.map(({ lots, prices, time, profit }) => (
          <SDeal key={prices}>
            <SDealLeft>
              <SDealTitle>
                <SDealSymbol>
                  <SSqueeze $scale={0.84}>AUUSDm,</SSqueeze>
                </SDealSymbol>
                <SDealSide>
                  <SSqueeze $scale={0.86}>buy {lots}</SSqueeze>
                </SDealSide>
              </SDealTitle>
              <SDealPrices $scale={0.875}>{prices}</SDealPrices>
            </SDealLeft>
            <SDealRight>
              <SDealTime $scale={0.81}>2023.05.19 {time}</SDealTime>
              <SDealProfit $scale={0.83} $left={profit.length > 4 ? 52.5 : 59}>
                {profit}
              </SDealProfit>
            </SDealRight>
          </SDeal>
        ))}
      </SShotContent>
      <ShotFooter active={3} />
    </SShotInner>
  </SShot>
)

/* ---------- page parts ---------- */

const Header = () => (
  <SHeader>
    <SStatusBar>
      <STime>9:43</STime>
      <StatusIcons />
      <SSpacer />
      <SystemIcons />
    </SStatusBar>
    <SToolbar>
      <SToolIcon $width={92} $top={40}>
        <svg width="38" height="32" viewBox="0 0 38 32">
          <path
            d="M33 16H5M18.500 3 5 16l13.500 13"
            fill="none"
            stroke="#fff"
            strokeWidth="4"
            strokeLinecap="round"
            strokeLinejoin="round"
          />
        </svg>
      </SToolIcon>
      <SToolIcon $width={108} $top={15}>
        <Avatar />
      </SToolIcon>
      <SChannel>
        <SChannelName>CEO_TRADING_TEAM.</SChannelName>
        <SSubscribers>515 subscribers</SSubscribers>
      </SChannel>
      <SToolIcon $width={52} $top={40}>
        <svg width="8" height="32" viewBox="0 0 8 32" fill="#fff">
          <circle cx="4" cy="4" r="4" />
          <circle cx="4" cy="16" r="4" />
          <circle cx="4" cy="28" r="4" />
        </svg>
      </SToolIcon>
    </SToolbar>
  </SHeader>
)

const Post = () => (
  <SBubble>
    <SReply>
      <SReplyLine />
      <SReplyThumb>
        <SThumbText>AUUSD</SThumbText>
      </SReplyThumb>
      <SReplyText>
        <SReplyName>
          CEO_TRADING_TEAM.
          <STrade>TM</STrade>
        </SReplyName>
        <SReplyBody>
          XAUUSD BUY NOW
          <SBang>
            <svg width="24" height="26" viewBox="0 0 24 26" fill="#f51b0c">
              <path d="M1 0h8L7 17H3ZM15 0h8l-2 17h-4Z" />
              <circle cx="5" cy="22.500" r="3.300" />
              <circle cx="19" cy="22.500" r="3.300" />
            </svg>
          </SBang>
          OP : 19…
        </SReplyBody>
      </SReplyText>
    </SReply>
    <SAlbum>
      <ChartShot />
      <HistoryShot />
    </SAlbum>
    <SMessage>
      <SLine>XAUUSD(BUY) HITS</SLine>
      <SLine>TP ALL</SLine>
      <SLine />
      <SLine>
        All TP HiT
        <SCools>
          {[0, 1, 2, 3].map((i) => (
            <SCool key={i}>
              <span>COOL</span>
            </SCool>
          ))}
        </SCools>
      </SLine>
      <SLine />
      <SLine>
        100+ PIPS PrOfit
        <svg width="130" height="61" viewBox="-7.500 0 130 61">
          <Fire />
          <g transform="translate(57 1)">
            <HeartEyes />
          </g>
        </svg>
      </SLine>
      <SLine>
        <svg width="61" height="61" viewBox="0 0 61 61">
          <path fill="#f9bd29" d="M26 6V2c3-5 10-3 12 4l4 20-13-2Z" />
        </svg>
      </SLine>
    </SMessage>
  </SBubble>
)

const Composer = () => (
  <SComposer>
    <svg width="48" height="48" viewBox="0 0 48 48" fill="none" stroke="#8e979d" strokeWidth="3.200">
      <circle cx="24" cy="24" r="22" />
      <path strokeLinecap="round" d="M15 29.500c4 6.500 14 6.500 18 0" />
      <g fill="#8e979d" stroke="none">
        <ellipse cx="16.700" cy="20" rx="2.700" ry="3.300" />
        <ellipse cx="31.300" cy="20" rx="2.700" ry="3.300" />
      </g>
    </svg>
    <SPlaceholder>Broadcast</SPlaceholder>
    <SComposerIcons>
      <svg width="41" height="48" viewBox="0 0 41 48" fill="none" stroke="#8e979d" strokeWidth="3">
        <path d="M7 36V20C7 1 33 1 33 20v16" />
        <path
          fill="#8e979d"
          stroke="none"
          d="M16.500 4a3.500 4 0 0 1 7 0v4h-7ZM5.500 34h3v3h23v-3h3l4.500 4.500V40H1v-1.500ZM15.500 42h9q-.5 4.500-4.500 4.500T15.500 42Z"
        />
      </svg>
      <svg width="44" height="48" viewBox="0 0 44 48" fill="none" stroke="#8e979d" strokeWidth="3.200" strokeLinecap="round">
        <path d="M4.500 20.500 19 7c6-6 13-6 18-1 5 6 4 12-1 17.500L19 41c-4 5-10 5-14 2-4-5-3-10 1-14L23 12.500c3-3 6-2 8 0 2 3 1 5-1 7.500L15.500 35" />
      </svg>
      <svg width="37" height="52" viewBox="0 0 37 52" fill="none" stroke="#8e979d" strokeWidth="3.400" strokeLinecap="round">
        <rect x="9" y="2.500" width="19.500" height="32.500" rx="9.700" />
        <path d="M2 27c0 21 33.500 21 33.500 0M18.700 43v7" />
      </svg>
    </SComposerIcons>
  </SComposer>
)

const Tofu = () => (
  <STofu>
    <svg width="20" height="22" viewBox="0 0 20 22" fill="none" stroke="#f8f8f8" strokeWidth="1.300">
      <path d="M1 1h17v19H1zM5 4l9.500 13M14.500 4 5 17" />
    </svg>
  </STofu>
)

const Watermark = () => (
  <SWatermark>
    <svg width="26" height="28" viewBox="0 0 26 28">
      <path fill="#fff" d="M7 0h12q6 0 6 6v11q0 6-7 7l-5 4 1-4H7q-6 0-6-6V6q0-6 6-6Z" />
      <path fill="none" stroke="#444" strokeWidth="1.300" d="M18 5c-6-3-7 5-8 12q0 5-4 5M6 12.500q2 2 8-1M18 9v4" />
    </svg>
    <SAt>@</SAt>
    {CROSS_COUNT.map((count) => (
      <Fragment key={count}>
        {Array.from({ length: count }, (_, i) => (
          <Tofu key={i} />
        ))}
        <SUnderscore />
      </Fragment>
    ))}
    <SDigit>2</SDigit>
  </SWatermark>
)

const Navigation = () => (
  <SNavigation>
    <svg width="36" height="36" viewBox="0 0 36 36" fill="none" stroke="#666" strokeWidth="4">
      <rect x="4" y="4" width="28" height="28" rx="7.500" />
    </svg>
    <svg width="36" height="36" viewBox="0 0 36 36" fill="none" stroke="#666" strokeWidth="4">
      <circle cx="18" cy="18" r="16" />
    </svg>
    <svg width="36" height="36" viewBox="0 0 36 36" fill="none" stroke="#666" strokeWidth="4">
      <path d="M6 15 25 4.500q6-2 6 4v19q0 6-6 4L6 21q-4-3 0-6Z" />
    </svg>
    <Watermark />
  </SNavigation>
)

const App = () => {
  return (
    <SPhone>
      <GlobalStyle />
      <Header />
      <SChat>
        <SPreviousBubble>
          <svg width="30" height="7" viewBox="0 0 30 7">
            <path fill="#3c8ccc" d="M2 0h7L6 3l7-3h7l-4 2 12-2c-4 4-13 5-17 3-3 2-6 4-11 3Z" />
          </svg>
        </SPreviousBubble>
        <Post />
      </SChat>
      <Composer />
      <Navigation />
    </SPhone>
  )
}

export default App
